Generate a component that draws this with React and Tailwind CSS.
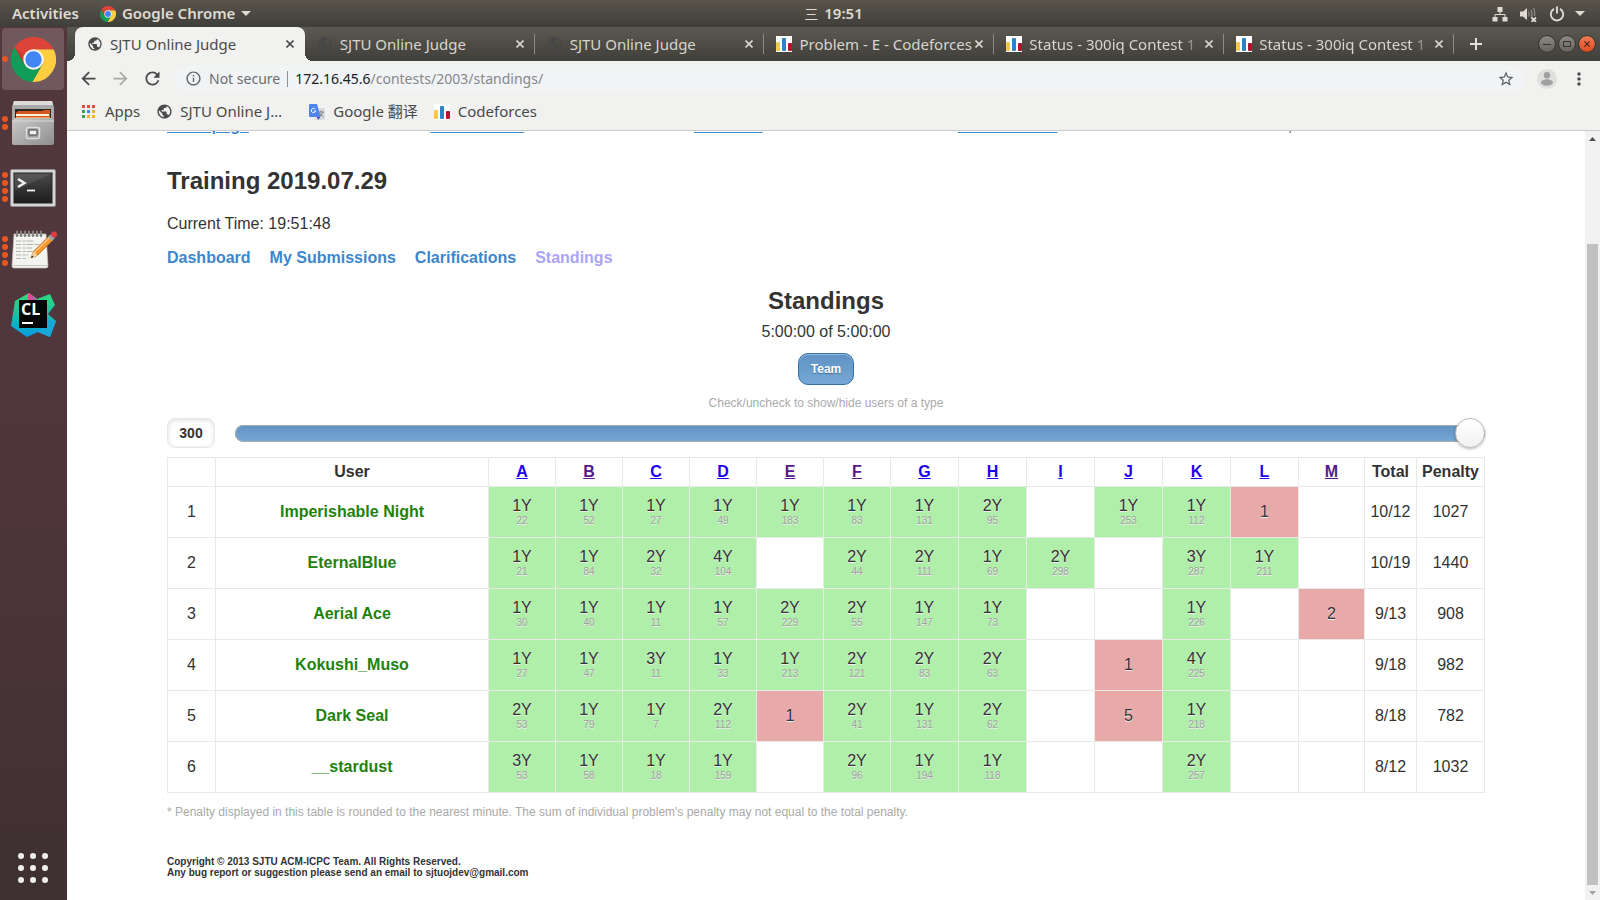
import React, { useState } from "react";
import {
  MdArrowBack,
  MdArrowForward,
  MdRefresh,
  MdInfoOutline,
  MdStarBorder,
  MdMoreVert,
  MdPublic,
} from "react-icons/md";

function ChromeLogo({ className }) {
  return (
    <svg viewBox="2 2 44 44" className={className} aria-hidden="true">
      <path d="M24 14 L43.6 14 A22 22 0 0 1 22.86 45.97 L32.66 29 Z" fill="#ffcd40" />
      <path d="M22.86 45.97 A22 22 0 0 1 5.54 12.03 L15.34 29 L24 24 L32.66 29 Z" fill="#109d58" />
      <path d="M5.54 12.03 A22 22 0 0 1 43.6 14 L24 14 L24 24 L15.34 29 Z" fill="#dc4437" />
      <path d="M15.34 29 L5.54 12.03 L13 18 Z" fill="#a52714" opacity="0.35" />
      <circle cx="24" cy="24" r="10" fill="#f4f4f4" />
      <circle cx="24" cy="24" r="8" fill="#4286f5" />
    </svg>
  );
}

function FilesIcon() {
  return (
    <svg viewBox="0 0 46 46" className="size-[46px]" aria-hidden="true">
      <defs>
        <linearGradient id="cabinet" x1="0" y1="0" x2="1" y2="1">
          <stop offset="0" stopColor="#c9c9c9" />
          <stop offset="1" stopColor="#8e8e8e" />
        </linearGradient>
      </defs>
      <path d="M4 1 H42 L44 7 V41 H2 V7 Z" fill="#a9a9a9" />
      <path d="M4 1 H42 L43 5 H3 Z" fill="#dcdcdc" />
      <rect x="5" y="9" width="36" height="12" fill="#2c2723" />
      <path d="M6 13 L8 11 H32 L34 10 H40 V20 H6 Z" fill="#d2561d" />
      <rect x="6" y="14" width="33" height="2" fill="#fff1df" />
      <rect x="6" y="17" width="34" height="2" fill="#f0a860" />
      <path d="M2 21 L5 18 H41 L44 21 V43 Q44 45 42 45 H4 Q2 45 2 43 Z" fill="url(#cabinet)" />
      <path d="M2 21 H44" stroke="#d8d8d8" />
      <rect x="16.500" y="27.500" width="13" height="11" rx="2" fill="#a2a2a2" stroke="#dedede" strokeWidth="1.500" />
      <rect x="19" y="30" width="8" height="5" rx="0.500" fill="#eee" stroke="#3c3c3c" />
    </svg>
  );
}

function TerminalIcon() {
  return (
    <svg viewBox="0 -2 46 40" className="h-[40px] w-[46px]" aria-hidden="true">
      <defs>
        <linearGradient id="term" x1="0" y1="0" x2="0" y2="1">
          <stop offset="0" stopColor="#4a4a4a" />
          <stop offset="1" stopColor="#1c1c1c" />
        </linearGradient>
      </defs>
      <rect x="0.500" y="0.500" width="45" height="37" rx="1.500" fill="#d5d5d5" stroke="#8d8d8d" />
      <rect x="4" y="4" width="38" height="30" fill="url(#term)" stroke="#222" />
      <path d="M4.500 4.500 H41.500 L4.500 22 Z" fill="#fff" opacity="0.090" />
      <path d="M8 10 L14.500 14 L8 18" fill="none" stroke="#f2f2f2" strokeWidth="2.400" />
      <path d="M17 21.500 H25" stroke="#f2f2f2" strokeWidth="1.800" />
    </svg>
  );
}

function NotesIcon() {
  return (
    <svg viewBox="-1 0 48 44" className="h-[44px] w-[48px]" aria-hidden="true">
      <path d="M4 5 H36 L38 37 Q38 39 36 39 H4 Q2 39 2 37 Z" fill="#f3f3ef" stroke="#c2c2bc" strokeWidth="0.700" />
      <path d="M2.500 36.500 H37.500" stroke="#c4c4bc" />
      {[7, 11, 15, 19, 23, 27, 31].map((x) => (
        <g key={x}>
          <circle cx={x} cy="6.500" r="1.300" fill="#555" />
          <path d={`M${x} 6 V2.500`} stroke="#8a8a8a" strokeWidth="1.800" strokeLinecap="round" />
        </g>
      ))}
      <path
        d="M6 12 H24 M6 15.500 H32 M6 19 H22 M6 22.500 H30 M6 26 H18 M6 29.500 H17"
        stroke="#b7b7b2"
        strokeWidth="1.200"
        strokeDasharray="5 1.500 3 1 7 1"
      />
      <path d="M21 29 L23.500 22.500 L39 7 L43 11 L27.500 26.500 Z" fill="#f3972c" stroke="#b5651c" strokeWidth="0.700" />
      <path d="M24.500 23.500 L40 8" stroke="#ffc476" strokeWidth="1.600" />
      <path d="M21 29 L23.500 22.500 L27.500 26.500 Z" fill="#ecd2a6" />
      <path d="M21 29 L22 26.500 L23.500 28 Z" fill="#222" />
      <path d="M38 8 L41 5 L45 9 L42 12 Z" fill="#9aa6b0" />
      <circle cx="44" cy="5.500" r="3" fill="#e33b3f" />
    </svg>
  );
}

function CLionIcon() {
  return (
    <svg viewBox="0 0 46 46" className="size-[46px]" aria-hidden="true">
      <defs>
        <linearGradient id="clA" x1="0" y1="0" x2="0" y2="1">
          <stop offset="0.150" stopColor="#27d583" />
          <stop offset="0.950" stopColor="#0aa0df" />
        </linearGradient>
        <linearGradient id="clB" x1="0" y1="0" x2="1" y2="1">
          <stop offset="0" stopColor="#ff3a8c" />
          <stop offset="1" stopColor="#8a78b4" />
        </linearGradient>
      </defs>
      <path d="M5 9 L19 1 L27 7 L40 2 L45 13 L38 22 L46 29 L40 45 L28 40 L17 45 L1 34 Z" fill="url(#clA)" />
      <path d="M38 28 L46 29 L40 45 L28 40 Z" fill="#17a8d8" />
      <path d="M18 2 L19 1 L27 7 L27 10 H18 Z" fill="url(#clB)" />
      <rect x="9" y="8" width="28" height="28" fill="#060606" />
      <text x="11" y="23" fontSize="16" fontWeight="700" fontFamily="Open Sans, sans-serif" fill="#fff">
        CL
      </text>
      <rect x="12" y="30" width="11" height="2" fill="#fff" />
    </svg>
  );
}

function CodeforcesIcon() {
  return (
    <svg viewBox="0 0 16 16" className="size-4 shrink-0" aria-hidden="true">
      <rect width="16" height="16" fill="#fff" />
      <rect x="0" y="6" width="4" height="9" rx="1" fill="#f5c84c" />
      <rect x="6" y="2" width="4" height="13" rx="1" fill="#2f82c6" />
      <rect x="12" y="7" width="4" height="8" rx="1" fill="#b3142b" />
    </svg>
  );
}

function TranslateIcon() {
  return (
    <svg viewBox="0 0 16 16" className="size-4 shrink-0" aria-hidden="true">
      <rect x="6" y="4" width="10" height="12" rx="1" fill="#dcdcdc" />
      <path d="M9.500 8 H15 M12 6.500 V8 M14 8 Q13 11.500 9.500 13 M10.500 9 Q12 11.500 14.500 13" stroke="#6b7a80" strokeWidth="0.900" fill="none" />
      <path d="M1 0 H8 L11.500 13 H1 Q0 13 0 12 V1 Q0 0 1 0 Z" fill="#5086ec" />
      <path d="M8 13 H11.500 L9 16 Z" fill="#3b4fb8" />
      <path d="M6.300 5.200 A2.200 2.200 0 1 0 6.700 7 H4.700" fill="none" stroke="#fff" strokeWidth="1" />
    </svg>
  );
}

function AppsGridIcon() {
  const colors = ["#e24a41", "#e24a41", "#e24a41", "#36a55a", "#4385f4", "#f3b32a", "#36a55a", "#f3b32a", "#f3b32a"];
  return (
    <svg viewBox="0 0 13 13" className="size-[13px]" aria-hidden="true">
      {colors.map((c, i) => (
        <rect key={i} x={(i % 3) * 5} y={Math.floor(i / 3) * 5} width="3" height="3" fill={c} />
      ))}
    </svg>
  );
}

function Cross({ className }) {
  return (
    <svg viewBox="0 0 8 8" className={className} aria-hidden="true">
      <path d="M0.500 0.500 L7.500 7.500 M7.500 0.500 L0.500 7.500" stroke="currentColor" strokeWidth="1.600" />
    </svg>
  );
}

function Caret() {
  return (
    <svg viewBox="0 0 10 5" className="h-[5px] w-[10px]" aria-hidden="true">
      <path d="M0 0 H10 L5 5 Z" fill="currentColor" />
    </svg>
  );
}

function SystemBar() {
  return (
    <header className="grid h-[27px] shrink-0 grid-cols-[1fr_auto_1fr] items-center bg-linear-to-b from-[#59554d] to-[#403e39] px-3 text-[15px] font-semibold text-[#dfdbd2]">
      <div className="flex items-center gap-[21px]">
        <button>Activities</button>
        <button className="flex items-center gap-[6px]">
          <ChromeLogo className="size-4" />
          Google Chrome
          <Caret />
        </button>
      </div>
      <button className="ml-[67px] flex items-center gap-[6px]">
        <span className="text-[14px] font-normal">三</span>
        <span>19:51</span>
      </button>
      <div className="flex items-center gap-3 justify-self-end pr-[3px]">
        <button aria-label="Network">
          <svg viewBox="0 0 16 16" className="size-4" aria-hidden="true">
            <path d="M5.500 1 h5 v5 h-5 Z M0.500 11 h5 v4.500 h-5 Z M10.500 11 h5 v4.500 h-5 Z" fill="currentColor" />
            <path d="M8 6 V8.500 M3 11 V8.500 H13 V11" stroke="currentColor" fill="none" />
          </svg>
        </button>
        <button aria-label="Volume">
          <svg viewBox="0 0 17 16" className="h-4 w-[17px]" aria-hidden="true">
            <path d="M0 5.500 H3 L7 2 V14 L3 10.500 H0 Z" fill="currentColor" />
            <path d="M8.500 5.500 Q10 8 8.500 10.500 M11 4 Q13 8 11 12 M13.500 2 Q15.500 6 14.500 10" stroke="#8c8982" strokeWidth="1.300" fill="none" />
            <path d="M11.500 11.500 L16 16 M16 11.500 L11.500 16" stroke="currentColor" strokeWidth="1.800" />
          </svg>
        </button>
        <button aria-label="Power" className="flex items-center gap-[10px]">
          <svg viewBox="0 0 16 16" className="size-4" aria-hidden="true">
            <path d="M5 2.800 A6.200 6.200 0 1 0 11 2.800" stroke="currentColor" strokeWidth="1.900" fill="none" />
            <path d="M8 0.500 V7.500" stroke="currentColor" strokeWidth="1.900" />
          </svg>
          <Caret />
        </button>
      </div>
    </header>
  );
}

const dockItems = [
  { name: "Google Chrome", windows: 1, icon: <ChromeLogo className="size-[45px]" />, active: true },
  { name: "Files", windows: 2, icon: <FilesIcon /> },
  { name: "Terminal", windows: 4, icon: <TerminalIcon /> },
  { name: "Text Editor", windows: 4, icon: <NotesIcon /> },
  { name: "CLion", windows: 0, icon: <CLionIcon /> },
];

function Dock() {
  return (
    <nav aria-label="Dock" className="flex w-[67px] shrink-0 flex-col justify-between bg-linear-to-b from-[#52383d] via-[#4f363c] to-[#3e3033]">
      <div className="flex flex-col gap-[2px] pt-px">
        {dockItems.map((item) => (
          <button
            key={item.name}
            aria-label={item.name}
            className={
              item.active
                ? "relative ml-[2px] flex h-[62px] w-[62px] items-center justify-center rounded bg-[#70585d]"
                : "relative ml-[2px] flex h-[62px] w-[62px] items-center justify-center rounded"
            }
          >
            <span className="absolute inset-y-0 left-0 flex flex-col justify-center gap-[2px]">
              {Array.from({ length: item.windows }, (_, i) => (
                <span key={i} className="size-[6px] rounded-full bg-[#e95420]" />
              ))}
            </span>
            {item.icon}
          </button>
        ))}
      </div>
      <button aria-label="Show Applications" className="mb-[17px] ml-[18px] grid w-[30px] grid-cols-3 gap-[6px]">
        {Array.from({ length: 9 }, (_, i) => (
          <span key={i} className="size-[6px] rounded-full bg-[#f2f1f0]" />
        ))}
      </button>
    </nav>
  );
}

const tabs = [
  { title: "SJTU Online Judge", icon: "globe" },
  { title: "SJTU Online Judge", icon: "globe" },
  { title: "SJTU Online Judge", icon: "globe" },
  { title: "Problem - E - Codeforces", icon: "cf" },
  { title: "Status - 300iq Contest 1 -", icon: "cf", fade: true },
  { title: "Status - 300iq Contest 1 -", icon: "cf", fade: true },
];

function TabStrip() {
  return (
    <div className="flex h-[34px] shrink-0 bg-linear-to-b from-[#5b5950] to-[#413f3b] text-[#d8d5cd]">
      <div role="tablist" className="grid min-w-0 flex-1 grid-cols-6 pl-[8px]">
        {tabs.map((tab, i) => {
          const active = i === 0;
          return (
            <div
              key={i}
              className={
                active
                  ? "relative flex min-w-0 items-center rounded-t-lg bg-[#f1f1ef] pl-3 text-[#4c4c4c]"
                  : "flex min-w-0 items-center pl-3"
              }
            >
              {active && (
                <>
                  <span className="absolute bottom-0 -left-2 size-2 bg-[radial-gradient(circle_at_0_0,transparent_8px,#f1f1ef_8px)]" />
                  <span className="absolute -right-2 bottom-0 size-2 bg-[radial-gradient(circle_at_100%_0,transparent_8px,#f1f1ef_8px)]" />
                </>
              )}
              {tab.icon === "globe" ? (
                <MdPublic className={active ? "size-4 shrink-0 text-[#4a4a4a]" : "size-4 shrink-0 text-[#474747]"} />
              ) : (
                <CodeforcesIcon />
              )}
              <button
                role="tab"
                aria-selected={active}
                className={
                  tab.fade
                    ? "ml-[7px] min-w-0 flex-1 overflow-hidden text-left whitespace-nowrap [mask-image:linear-gradient(to_right,black_88%,transparent)]"
                    : "ml-[7px] min-w-0 flex-1 overflow-hidden text-left whitespace-nowrap"
                }
              >
                {tab.title}
              </button>
              <button aria-label="Close tab" className="ml-[3px]">
                <Cross className="size-[8px]" />
              </button>
              <span className={active ? "ml-[10px] h-5 w-px" : "ml-[10px] h-5 w-px bg-[#8c8a83]"} />
            </div>
          );
        })}
      </div>
      <button aria-label="New tab" className="ml-4 self-center">
        <svg viewBox="0 0 12 12" className="size-3" aria-hidden="true">
          <path d="M6 0 V12 M0 6 H12" stroke="#e4e1da" strokeWidth="2" />
        </svg>
      </button>
      <div className="mr-[5px] ml-[57px] flex items-center gap-1">
        <button aria-label="Minimize" className="flex size-4 items-center justify-center rounded-full bg-linear-to-b from-[#8c8a84] to-[#66645e] outline outline-[#3a3934]">
          <span className="h-px w-2 bg-[#35342f]" />
        </button>
        <button aria-label="Restore" className="flex size-4 items-center justify-center rounded-full bg-linear-to-b from-[#8c8a84] to-[#66645e] outline outline-[#3a3934]">
          <span className="h-[6px] w-2 border border-[#35342f]" />
        </button>
        <button aria-label="Close window" className="flex size-4 items-center justify-center rounded-full bg-linear-to-b from-[#f27a55] to-[#dd4a1f] text-[#47291e] outline outline-[#3a3934]">
          <Cross className="size-[6px]" />
        </button>
      </div>
    </div>
  );
}

function Toolbar() {
  return (
    <div className="flex h-[35px] shrink-0 items-center bg-[#f1f1ef] px-[11px] text-[#4a4a4a]">
      <div className="flex items-center gap-[11px]">
        <button aria-label="Back"><MdArrowBack className="size-[21px]" /></button>
        <button aria-label="Forward" className="text-[#a9a9a7]"><MdArrowForward className="size-[21px]" /></button>
        <button aria-label="Reload"><MdRefresh className="size-[21px]" /></button>
      </div>
      <div className="ml-3 flex h-7 min-w-0 flex-1 items-center rounded-full bg-[#f1f3f5] pr-[10px] pl-[10px]">
        <MdInfoOutline className="size-[17px] text-[#5f6368]" />
        <span className="ml-[7px] text-[14px] text-[#6b6e72]">Not secure</span>
        <span className="mx-[7px] h-4 w-px bg-[#8e9194]" />
        <div
          role="textbox"
          aria-label="Address"
          contentEditable
          suppressContentEditableWarning
          className="min-w-0 flex-1 text-[14px] whitespace-nowrap text-[#85888c]"
        >
          <span className="text-[#202124]">172.16.45.6</span>/contests/2003/standings/
        </div>
        <button aria-label="Bookmark this page"><MdStarBorder className="size-[18px] text-[#5a5d61]" /></button>
      </div>
      <button aria-label="Profile" className="ml-3">
        <svg viewBox="0 0 20 20" className="size-5" aria-hidden="true">
          <circle cx="10" cy="10" r="10" fill="#dfdfdd" />
          <circle cx="10" cy="6.300" r="3.200" fill="#a0a0a0" />
          <ellipse cx="10" cy="13.500" rx="6" ry="3.300" fill="#a0a0a0" />
        </svg>
      </button>
      <button aria-label="Chrome menu" className="ml-3"><MdMoreVert className="size-5" /></button>
    </div>
  );
}

function Bookmarks() {
  return (
    <nav aria-label="Bookmarks" className="flex h-[35px] shrink-0 items-center gap-4 border-b border-[#cbcbc9] bg-[#f1f1ef] pb-[3px] pl-[15px] text-[#4a4a4a]">
      <a href="#apps" className="flex items-center gap-[10px]"><AppsGridIcon />Apps</a>
      <a href="#sjtu" className="flex items-center gap-[7px] pr-1"><MdPublic className="size-[17px]" /><span className="w-[109px] truncate">SJTU Online Judge</span></a>
      <a href="#translate" className="flex items-center gap-2"><TranslateIcon />Google 翻译</a>
      <a href="#codeforces" className="flex items-center gap-2"><CodeforcesIcon />Codeforces</a>
    </nav>
  );
}

const problems = [
  ["A", false], ["B", true], ["C", false], ["D", false], ["E", true], ["F", true], ["G", false],
  ["H", false], ["I", false], ["J", false], ["K", false], ["L", false], ["M", true],
];

// One entry per problem: "tries:minute" when solved, "tries" when only attempted, "" when untouched.
const teams = [
  { name: "Imperishable Night", total: "10/12", penalty: 1027, cells: "1:22,1:52,1:27,1:49,1:183,1:83,1:131,2:95,,1:253,1:112,1," },
  { name: "EternalBlue", total: "10/19", penalty: 1440, cells: "1:21,1:84,2:32,4:104,,2:44,2:111,1:69,2:298,,3:287,1:211," },
  { name: "Aerial Ace", total: "9/13", penalty: 908, cells: "1:30,1:40,1:11,1:57,2:229,2:55,1:147,1:73,,,1:226,,2" },
  { name: "Kokushi_Muso", total: "9/18", penalty: 982, cells: "1:27,1:47,3:11,1:33,1:213,2:121,2:83,2:63,,1,4:225,," },
  { name: "Dark Seal", total: "8/18", penalty: 782, cells: "2:53,1:79,1:7,2:112,1,2:41,1:131,2:62,,5,1:218,," },
  { name: "__stardust", total: "8/12", penalty: 1032, cells: "3:53,1:58,1:18,1:159,,2:96,1:194,1:118,,,2:257,," },
];

function ResultCell({ value }) {
  if (!value) return <td className="border border-[#e9e9e9]" />;
  const [tries, minute] = value.split(":");
  if (!minute) {
    return <td className="border border-[#e9e9e9] bg-[#e8a9a9] text-shadow-[0_1px_0_#eee]">{tries}</td>;
  }
  return (
    <td className="border border-[#e9e9e9] bg-[#afefa9] text-shadow-[0_1px_0_#eee]">
      <div className="leading-[18px]">{tries}Y</div>
      <div className="text-[10px] leading-3 text-[#a0a0a0]">{minute}</div>
    </td>
  );
}

function StandingsTable() {
  return (
    <table className="mt-[9px] w-full table-fixed border-collapse text-center">
      <colgroup>
        <col className="w-[48px]" />
        <col />
        {problems.map(([p], i) => (
          <col key={p} className={i < 6 ? "w-[67px]" : i < 12 ? "w-[68px]" : "w-[66px]"} />
        ))}
        <col className="w-[52px]" />
        <col className="w-[68px]" />
      </colgroup>
      <thead>
        <tr className="h-[29px]">
          <th className="border border-[#e9e9e9]" />
          <th className="border border-[#e9e9e9]">User</th>
          {problems.map(([p, visited]) => (
            <th key={p} className="border border-[#e9e9e9]">
              <a href={"#" + p} className={visited ? "text-[#551a8b] underline" : "text-[#2200ee] underline"}>{p}</a>
            </th>
          ))}
          <th className="border border-[#e9e9e9]">Total</th>
          <th className="border border-[#e9e9e9]">Penalty</th>
        </tr>
      </thead>
      <tbody>
        {teams.map((team, i) => (
          <tr key={team.name} className="h-[51px]">
            <td className="border border-[#e9e9e9]">{i + 1}</td>
            <td className="border border-[#e9e9e9] font-bold text-[#1f820c]">{team.name}</td>
            {team.cells.split(",").map((value, j) => (
              <ResultCell key={j} value={value} />
            ))}
            <td className="border border-[#e9e9e9]">{team.total}</td>
            <td className="border border-[#e9e9e9]">{team.penalty}</td>
          </tr>
        ))}
      </tbody>
    </table>
  );
}

function TimeSlider() {
  const [minute, setMinute] = useState(300);
  return (
    <div className="mt-[7px] flex items-center gap-5">
      <input
        type="text"
        aria-label="Minute"
        value={minute}
        onChange={(e) => setMinute(Number(e.target.value) || 0)}
        className="h-[30px] w-12 rounded-lg border border-[#e8e8e8] bg-white text-center text-[14px] font-bold shadow-[inset_0_1px_4px_rgba(0,0,0,0.15)]"
      />
      <input
        type="range"
        aria-label="Contest time"
        min="0"
        max="300"
        value={minute}
        onChange={(e) => setMinute(Number(e.target.value))}
        className="h-[30px] min-w-0 flex-1 appearance-none bg-transparent [&::-webkit-slider-runnable-track]:h-[17px] [&::-webkit-slider-runnable-track]:rounded-full [&::-webkit-slider-runnable-track]:bg-linear-to-b [&::-webkit-slider-runnable-track]:from-[#5f92c4] [&::-webkit-slider-runnable-track]:to-[#77a8d4] [&::-webkit-slider-runnable-track]:shadow-[inset_0_0_0_1px_#aaa] [&::-webkit-slider-thumb]:-mt-[7px] [&::-webkit-slider-thumb]:size-[30px] [&::-webkit-slider-thumb]:appearance-none [&::-webkit-slider-thumb]:rounded-full [&::-webkit-slider-thumb]:border [&::-webkit-slider-thumb]:border-[#bbb] [&::-webkit-slider-thumb]:bg-linear-to-b [&::-webkit-slider-thumb]:from-white [&::-webkit-slider-thumb]:to-[#f1f1f1] [&::-webkit-slider-thumb]:shadow-[0_1px_3px_rgba(0,0,0,0.3)]"
      />
    </div>
  );
}

function Page() {
  return (
    <main className="min-w-0 flex-1 overflow-hidden px-[100px] font-['Liberation_Sans',Arial,sans-serif] text-base text-[#333]">
      <nav aria-label="Site" className="-mt-[15px] grid grid-cols-5 leading-5">
        <div><a href="#home" className="font-bold text-[#3e86cc] underline">Homepage</a></div>
        <div><a href="#problems" className="font-bold text-[#3e86cc] underline">Problem Set</a></div>
        <div><a href="#contests" className="font-bold text-[#3e86cc] underline">Contests</a></div>
        <div><a href="#submissions" className="font-bold text-[#3e86cc] underline">Submissions</a></div>
        <div>Welcome,</div>
      </nav>
      <h1 className="mt-[31px] text-2xl leading-7 font-bold">Training 2019.07.29</h1>
      <p className="mt-[17px]">Current Time: 19:51:48</p>
      <nav aria-label="Contest" className="mt-[10px] flex gap-[19px] font-bold text-[#3e86cc]">
        <a href="#dashboard">Dashboard</a>
        <a href="#my">My Submissions</a>
        <a href="#clarifications">Clarifications</a>
        <a href="#standings" className="text-[#aaa5f8]">Standings</a>
      </nav>
      <section className="text-center">
        <h2 className="mt-[17px] text-2xl leading-7 font-bold">Standings</h2>
        <p className="mt-[5px]">5:00:00 of 5:00:00</p>
        <label className="mt-[9px] inline-flex h-8 w-14 items-center justify-center rounded-[10px] border border-[#3470a3] bg-linear-to-b from-[#5f92c4] to-[#77a8d4] text-xs font-bold text-white shadow-[inset_0_1px_0_rgba(255,255,255,0.35)] text-shadow-[0_1px_1px_#3e6790]">
          <input type="checkbox" defaultChecked className="sr-only" />
          Team
        </label>
        <p className="mt-[10px] text-xs text-[#aaa]">Check/uncheck to show/hide users of a type</p>
      </section>
      <TimeSlider />
      <StandingsTable />
      <p className="mt-[11px] text-xs text-[#aaa]">
        * Penalty displayed in this table is rounded to the nearest minute. The sum of individual problem's penalty may not equal to the total penalty.
      </p>
      <footer className="mt-9 text-[10px] leading-[11px] font-bold">
        <p>Copyright © 2013 SJTU ACM-ICPC Team. All Rights Reserved.</p>
        <p>Any bug report or suggestion please send an email to sjtuojdev@gmail.com</p>
      </footer>
    </main>
  );
}

function Scrollbar() {
  return (
    <div className="flex w-[15px] shrink-0 flex-col items-center bg-[#f1f1f1]" aria-hidden="true">
      <svg viewBox="0 0 15 15" className="size-[15px]"><path d="M4 10 L7.500 6 L11 10 Z" fill="#505050" /></svg>
      <div className="flex min-h-0 w-full flex-1 flex-col px-[2px]">
        <div className="flex-[98]" />
        <div className="flex-[641] bg-[#c1c1c1]" />
      </div>
      <svg viewBox="0 0 15 15" className="size-[15px]"><path d="M4 6 L7.500 10 L11 6 Z" fill="#a3a3a3" /></svg>
    </div>
  );
}

export default function App() {
  return (
    <div className="flex h-screen flex-col overflow-hidden bg-white font-['Noto_Sans','Noto_Sans_CJK_SC',sans-serif] text-[15px]">
      <SystemBar />
      <div className="flex min-h-0 flex-1">
        <Dock />
        <div className="flex min-w-0 flex-1 flex-col">
          <TabStrip />
          <Toolbar />
          <Bookmarks />
          <div className="flex min-h-0 flex-1">
            <Page />
            <Scrollbar />
          </div>
        </div>
      </div>
    </div>
  );
}
